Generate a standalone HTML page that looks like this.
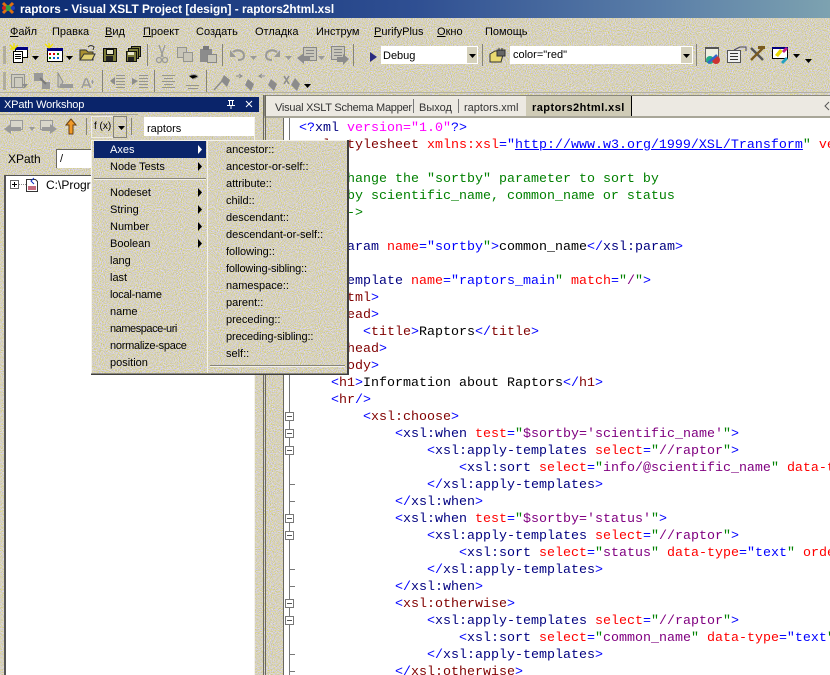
<!DOCTYPE html>
<html><head><meta charset="utf-8"><title>raptors</title>
<style>
html,body{margin:0;padding:0;width:830px;height:675px;overflow:hidden;background:#d6d2bd}
*{box-sizing:border-box}
.a{position:absolute}
.t{position:absolute;font:11px/14px "Liberation Sans",sans-serif;color:#000;white-space:pre}
.n{position:absolute;left:0;top:0}
pre{position:absolute;left:299px;top:120px;width:531px;height:555px;overflow:hidden;margin:0;font:13.33px/17px "Liberation Mono",monospace;color:#000}
pre i{font-style:normal}
.b{color:#00f}.v{color:#000080}.m{color:#800000}.r{color:#f00}.g{color:#008000}.p{color:#800080}.k{color:#f0f}.c{color:#008000}
</style></head>
<body>
<svg class="n" width="830" height="675"><defs>
<filter id="nz" x="0" y="0" width="100%" height="100%" color-interpolation-filters="sRGB"><feTurbulence type="fractalNoise" baseFrequency="0.95" numOctaves="1" seed="4"/><feColorMatrix type="matrix" values="0.3 0 0 0 0.69  0.3 0 0 0 0.67  0 1.4 0 0 0.04  0 0 0 0 1"/></filter>
<linearGradient id="tg" x1="0" x2="1" y1="0" y2="0"><stop offset="0" stop-color="#0a2a70"/><stop offset=".5" stop-color="#2f4f92"/><stop offset=".8" stop-color="#5b7fa8"/><stop offset="1" stop-color="#7da2b0"/></linearGradient>
</defs><rect width="830" height="675" filter="url(#nz)"/></svg>

<!-- title bar -->
<svg class="n" width="830" height="18"><rect width="830" height="18" fill="url(#tg)"/></svg>
<div class="t" style="left:20px;top:2px;font-size:11.850px;font-weight:bold;color:#fff">raptors - Visual XSLT Project [design] - raptors2html.xsl</div>

<!-- menu bar -->
<div class="t" style="left:10px;top:25px"><u>Ф</u>айл</div>
<div class="t" style="left:52px;top:25px">Правка</div>
<div class="t" style="left:105px;top:25px"><u>В</u>ид</div>
<div class="t" style="left:143px;top:25px"><u>П</u>роект</div>
<div class="t" style="left:196px;top:25px">Создать</div>
<div class="t" style="left:255px;top:25px">Отладка</div>
<div class="t" style="left:316px;top:25px">Инструм</div>
<div class="t" style="left:374px;top:25px"><u>P</u>urifyPlus</div>
<div class="t" style="left:437px;top:25px"><u>О</u>кно</div>
<div class="t" style="left:485px;top:25px">Помощь</div>

<!-- toolbar combos -->
<div class="a" style="left:381px;top:46px;width:97px;height:18px;background:#fff"></div>
<div class="a" style="left:467px;top:47px;width:10px;height:16px;background:#d6d2bd"></div>
<div class="t" style="left:383px;top:49px">Debug</div>
<div class="a" style="left:510px;top:46px;width:183px;height:18px;background:#fff"></div>
<div class="a" style="left:681px;top:47px;width:11px;height:16px;background:#d6d2bd"></div>
<div class="t" style="left:513px;top:48px">color="red"</div>

<!-- icons -->
<svg class="n" width="830" height="140">
<!-- grips -->
<g fill="#8c8a80"><rect x="3" y="46" width="3" height="18" opacity=".5"/><rect x="3" y="72" width="3" height="18" opacity=".5"/></g>
<!-- separators -->
<g fill="#85837a"><rect x="147" y="44" width="1" height="22"/><rect x="222" y="44" width="1" height="22"/><rect x="353" y="44" width="1" height="22"/><rect x="482" y="44" width="1" height="22"/><rect x="696" y="44" width="1" height="22"/><rect x="102" y="70" width="1" height="22"/><rect x="154" y="70" width="1" height="22"/><rect x="206" y="70" width="1" height="22"/></g>
<!-- new project -->
<rect x="15.500" y="47.500" width="12" height="10" fill="#fff" stroke="#000"/><rect x="15" y="47" width="13" height="3" fill="#000080"/>
<rect x="13.500" y="51.500" width="9" height="11" fill="#fff" stroke="#000"/><path d="M15 54.500h6M15 56.500h6M15 58.500h6" stroke="#000"/><path d="M10 45l4 4M14 43v6M18 45l-4 4M10 49h5" stroke="#f0e000" stroke-width="1.300"/>
<path d="M32 56h7l-3.500 4z" fill="#000"/>
<!-- new item -->
<rect x="47.500" y="48.500" width="15" height="13" fill="#fff" stroke="#000"/><rect x="47" y="48" width="16" height="3" fill="#000080"/>
<path d="M49 53h2v2h-2zM53 53h2v2h-2z" fill="#d00"/><path d="M57 53h2v2h-2zM49 57h2v2h-2z" fill="#080"/><path d="M53 57h2v2h-2zM57 57h2v2h-2z" fill="#06c"/>
<path d="M45 44l4 4M49 43v5M53 44l-4 4" stroke="#f0e000" stroke-width="1.300"/>
<path d="M66 56h7l-3.500 4z" fill="#000"/>
<!-- open -->
<path d="M80 60V50h6l2 2h5v8z" fill="#a89030" stroke="#333"/><path d="M80 60l4-6h11l-3 6z" fill="#e0d070" stroke="#333"/><path d="M88 47c2-2 4-2 6 0l-1 3" fill="none" stroke="#333"/>
<!-- save -->
<rect x="103.500" y="48.500" width="13" height="13" fill="#7c7c38" stroke="#111"/><rect x="106.500" y="49.500" width="7" height="5" fill="#e8e6c8" stroke="#111"/><rect x="106" y="56" width="7" height="5" fill="#222"/>
<!-- save all -->
<rect x="131.500" y="46.500" width="9" height="10" fill="#7c7c38" stroke="#111"/><rect x="128.500" y="48.500" width="10" height="10" fill="#7c7c38" stroke="#111"/><rect x="126.500" y="51.500" width="10" height="10" fill="#7c7c38" stroke="#111"/><rect x="128" y="52" width="6" height="3" fill="#e8e6c8"/><rect x="128" y="57" width="6" height="4" fill="#222"/>
<!-- cut, copy, paste disabled -->
<g fill="none" stroke="#9a9a96" stroke-width="1.300"><path d="M159 45l4 12M165 45l-4 12"/><circle cx="159" cy="60" r="2.500"/><circle cx="165" cy="60" r="2.500"/></g>
<g fill="#c8c5b8" stroke="#95958f"><rect x="177.500" y="47.500" width="9" height="10"/><rect x="183.500" y="52.500" width="9" height="9"/></g>
<rect x="200" y="49" width="12" height="13" fill="#8c8c8c"/><rect x="203" y="46" width="6" height="4" fill="#7a7a7a"/><rect x="207.500" y="54.500" width="9" height="8" fill="#c8c6ba" stroke="#888"/>
<!-- undo redo -->
<g fill="none" stroke="#9a9a96" stroke-width="2"><path d="M233 52c4-3 11-2 11 4 0 3-3 4-6 4"/><path d="M277 52c-4-3-11-2-11 4 0 3 3 4 6 4"/></g>
<path d="M230 50v7h6zM280 50v7h-6z" fill="#9a9a96"/>
<path d="M250 56h7l-3.500 4zM285 56h7l-3.500 4zM318 56h7l-3.500 4z" fill="#999"/>
<rect x="303.500" y="47.500" width="13" height="13" fill="#c8c6ba" stroke="#888"/><path d="M306 50.500h8M306 53.500h8M306 56.500h8" stroke="#888"/><path d="M297 58l7-5v3h6v5h-6v3z" fill="#8c8c8c"/>
<rect x="331.500" y="46.500" width="13" height="13" fill="#c8c6ba" stroke="#888"/><path d="M334 49.500h8M334 52.500h8M334 55.500h8" stroke="#888"/><path d="M349 59l-6-5v3h-6v5h6v3z" fill="#8c8c8c"/>
<!-- play -->
<path d="M370 52l7 5-7 5z" fill="#2a2a80"/>
<path d="M469 54h7l-3.500 4zM683 54h7l-3.500 4z" fill="#000"/>
<!-- open config -->
<path d="M490 62V54l5-3h9l-3 11z" fill="#e8d870" stroke="#333"/><path d="M497 50h8v6h-8z" fill="#666" stroke="#333"/><path d="M499 48v3M502 48v3" stroke="#333"/>
<!-- right icons -->
<rect x="705.500" y="47.500" width="13" height="14" fill="#eeeee0" stroke="#666"/><rect x="705" y="47" width="14" height="2" fill="#555"/><circle cx="710" cy="60" r="4" fill="#2a8"/><circle cx="716" cy="60" r="4" fill="#c33"/><path d="M708 63l9-8" stroke="#36c" stroke-width="2.500"/>
<rect x="727.500" y="50.500" width="13" height="12" fill="#eee" stroke="#555"/><path d="M730 53.500h8M730 56.500h8M730 59.500h8" stroke="#333"/><path d="M734 50l6-3h6v4" fill="none" stroke="#446"/>
<path d="M751 48l12 12" stroke="#555" stroke-width="2.400"/><path d="M763 48l-12 12" stroke="#7a5a20" stroke-width="2.400"/><path d="M758 46h7v3h-7z" fill="#7a5a20"/>
<rect x="772.500" y="47.500" width="15" height="11" fill="#fff" stroke="#000"/><rect x="772" y="47" width="16" height="2" fill="#000080"/><path d="M775 55l5-6 3 2-5 6z" fill="#e8d800"/><path d="M782 51l4-4 2 2-4 4z" fill="#c0208a"/><path d="M781 62l5-5 2 2-5 5z" fill="#20a0c0"/>
<path d="M793 54h7l-3.500 4zM805 59h7l-3.500 4z" fill="#000"/>
<!-- toolbar 2, disabled -->
<g stroke="#95958f" fill="#cdcbbf"><rect x="11.500" y="74.500" width="13" height="13"/><rect x="14.500" y="77.500" width="8" height="10"/></g><path d="M22 84h6l-3 4z" fill="#8c8c8c"/>
<path d="M34 73h9v8h-9zM42 82h8v7h-8z" fill="#999"/><path d="M40 78l6 6" stroke="#7a7a7a" stroke-width="2"/>
<path d="M58 73v14h2l3-5z" fill="#c8c6ba" stroke="#8c8c8c"/><rect x="60" y="84" width="13" height="4" fill="#999"/>
<path d="M82 88l3.500-9h1.500l3.500 9M84 85h5" fill="none" stroke="#999" stroke-width="1.500"/><path d="M91 82h3M92.500 80v4" stroke="#999"/>
<g stroke="#95958f"><path d="M116 75.500h9M116 78.500h9M116 81.500h9M116 84.500h9M116 87.500h9"/><path d="M139 75.500h9M139 78.500h9M139 81.500h9M139 84.500h9M139 87.500h9"/><path d="M162 75.500h13M164 78.500h9M162 81.500h13M164 84.500h9M162 87.500h13"/><path d="M186 85.500h13M188 88.500h10M189 76c3-2 8-2 9 1l-5 2"/></g>
<path d="M110 81l5-4v8zM132 78l6 3-6 4z" fill="#8c8c8c"/>
<path d="M214 90l8-9" stroke="#8c8c8c" stroke-width="1.500"/><path d="M224 75l6 5-3 7-6-6z" fill="#8c8c8c"/>
<path d="M236 76h5M239 74l3 2-3 2" stroke="#8c8c8c" fill="none"/><path d="M248 79l6 5-3 7-6-6z" fill="#8c8c8c"/>
<path d="M260 76h5M262 74l-3 2 3 2" stroke="#8c8c8c" fill="none"/><path d="M271 79l6 5-3 7-6-6z" fill="#8c8c8c"/>
<path d="M284 76l5 8M289 76l-5 8" stroke="#8c8c8c" stroke-width="1.500"/><path d="M295 78l5 6-3 7-6-6z" fill="#8c8c8c"/>
<path d="M304 84h7l-3.500 4z" fill="#000"/>
<!-- separator under toolbars -->
<rect x="0" y="92" width="830" height="1" fill="#b4b2a4"/>
</svg>

<!-- XPath Workshop -->
<div class="a" style="left:0;top:97px;width:259px;height:15px;background:#0a246a"></div>
<div class="t" style="left:4px;top:98px;color:#fff;letter-spacing:-.15px">XPath Workshop</div>
<svg class="n" width="265" height="175">
<path d="M228 100.500h6M229.500 100v5M232.500 100v5M227 105.500h8M231 105v4" stroke="#fff" fill="none"/>
<path d="M246 101l6 6M252 101l-6 6" stroke="#fff"/>
<rect x="0" y="114" width="138" height="1" fill="#a8a69a"/>
<!-- back / fwd / up -->
<rect x="10.500" y="120.500" width="12" height="9" fill="#d8d6ca" stroke="#999"/><path d="M4 129l7-5v3h10v4H11v3z" fill="#999"/>
<path d="M29 127h6l-3 4z" fill="#999"/>
<rect x="40.500" y="120.500" width="12" height="9" fill="#d8d6ca" stroke="#999"/><path d="M57 129l-7-5v3H42v4h8v3z" fill="#999"/>
<path d="M71 119l-5 6h3v9h4v-9h3z" fill="#f09a28" stroke="#6a4010"/>
<rect x="86" y="118" width="1" height="17" fill="#85837a"/>
<rect x="131" y="118" width="1" height="17" fill="#85837a"/>
<rect x="91.500" y="116.500" width="22" height="21" fill="none" stroke="#f0eee4"/>
<path d="M113.500 116.500h13v21h-13z" fill="none" stroke="#85837a"/>
<path d="M118 126h7l-3.500 4z" fill="#000"/>
</svg>
<div class="t" style="left:94px;top:120px;font-size:10px">f (x)</div>
<div class="a" style="left:144px;top:117px;width:111px;height:19px;background:#fff"></div>
<div class="t" style="left:147px;top:122px">raptors</div>
<div class="t" style="left:8px;top:152px;font-size:12px">XPath</div>
<div class="a" style="left:56px;top:149px;width:60px;height:19px;background:#fff;border-top:1px solid #6a6860;border-left:1px solid #6a6860"></div>
<div class="t" style="left:60px;top:152px">/</div>

<!-- tree -->
<div class="a" style="left:4px;top:175px;width:250px;height:500px;background:#fff;border-left:2px solid #555;border-top:1px solid #555"></div>
<svg class="n" width="60" height="200">
<rect x="10.500" y="180.500" width="8" height="8" fill="#fff" stroke="#666"/><path d="M12 184.500h5M14.500 182v5" stroke="#000"/>
<path d="M19 184.500h7" stroke="#888" stroke-dasharray="1 1"/>
<path d="M26.500 179.500h9l2 2v10h-11z" fill="#fff" stroke="#333"/><path d="M34 178l-3 3 3 3" stroke="#1030c0" fill="none"/><path d="M28 187h8M28 189h8" stroke="#a01030" stroke-width="1.200"/>
</svg>
<div class="t" style="left:46px;top:178px;font-size:12px">C:\Progra</div>

<!-- tabs -->
<div class="a" style="left:264px;top:95px;width:566px;height:22px;background:#ece9e2;border-top:1px solid #8a887c;border-left:1px solid #8a887c"></div>
<div class="a" style="left:526px;top:96px;width:106px;height:21px;background:#cfcbb6;border-right:1px solid #000"></div>
<div class="a" style="left:458px;top:99px;width:1px;height:14px;background:#777"></div>
<div class="a" style="left:413px;top:99px;width:1px;height:14px;background:#777"></div>
<div class="a" style="left:264px;top:116px;width:566px;height:2px;background:#a8a698"></div>
<div class="t" style="left:275px;top:101px;color:#333;letter-spacing:-.25px">Visual XSLT Schema Mapper</div>
<div class="t" style="left:419px;top:101px;color:#333">Выход</div>
<div class="t" style="left:464px;top:101px;color:#333">raptors.xml</div>
<div class="t" style="left:532px;top:101px;font-weight:bold;letter-spacing:.45px">raptors2html.xsl</div>
<svg class="n" style="left:822px;top:100px" width="8" height="12"><path d="M7 2L3 6l4 4" fill="none" stroke="#555"/></svg>

<!-- editor -->
<div class="a" style="left:254px;top:118px;width:1px;height:557px;background:#f4f2ea"></div>
<div class="a" style="left:263px;top:95px;width:1px;height:580px;background:#6a6860"></div>
<div class="a" style="left:265px;top:95px;width:1px;height:580px;background:#6a6860"></div>
<div class="a" style="left:283px;top:118px;width:547px;height:557px;background:#fff;border-left:1px solid #6a6860"></div>
<svg class="n" width="300" height="675" style="left:0;top:0">
<path d="M289.500 118V675" stroke="#777"/>
<g stroke="#777" fill="#fff"><rect x="285.500" y="412.500" width="8" height="8"/><rect x="285.500" y="429.500" width="8" height="8"/><rect x="285.500" y="446.500" width="8" height="8"/><rect x="285.500" y="514.500" width="8" height="8"/><rect x="285.500" y="531.500" width="8" height="8"/><rect x="285.500" y="599.500" width="8" height="8"/><rect x="285.500" y="616.500" width="8" height="8"/></g>
<path d="M287 416.500h5M287 433.500h5M287 450.500h5M287 518.500h5M287 535.500h5M287 603.500h5M287 620.500h5" stroke="#555"/>
<path d="M290 484.500h5M290 501.500h5M290 569.500h5M290 586.500h5M290 654.500h5M290 671.500h5" stroke="#777"/>
</svg>

<pre><i class="b">&lt;?</i><i class="v">xml</i> <i class="k">version="1.0"</i><i class="b">?&gt;</i>
<i class="b">&lt;</i><i class="m">xsl:stylesheet</i> <i class="r">xmlns:xsl</i><i class="b">=</i><i class="b">"<u>http://www.w3.org/1999/XSL/Transform</u></i><i class="g">"</i> <i class="r">version</i><i class="b">=</i>

<i class="b">&lt;!--</i> <i class="c">change the "sortby" parameter to sort by</i>
<i class="c">      by scientific_name, common_name or status</i>
<i class="c">     --&gt;</i>

<i class="b">&lt;</i><i class="v">xsl:param</i> <i class="r">name</i><i class="b">="sortby</i><i class="g">"</i><i class="b">&gt;</i>common_name<i class="b">&lt;/</i><i class="v">xsl:param</i><i class="b">&gt;</i>

<i class="b">&lt;</i><i class="v">xsl:template</i> <i class="r">name</i><i class="b">="raptors_main</i><i class="g">"</i> <i class="r">match</i><i class="b">=</i><i class="g">"</i><i class="p">/</i><i class="g">"</i><i class="b">&gt;</i>
    <i class="b">&lt;</i><i class="m">html</i><i class="b">&gt;</i>
    <i class="b">&lt;</i><i class="m">head</i><i class="b">&gt;</i>
        <i class="b">&lt;</i><i class="m">title</i><i class="b">&gt;</i>Raptors<i class="b">&lt;/</i><i class="m">title</i><i class="b">&gt;</i>
    <i class="b">&lt;/</i><i class="m">head</i><i class="b">&gt;</i>
    <i class="b">&lt;</i><i class="m">body</i><i class="b">&gt;</i>
    <i class="b">&lt;</i><i class="m">h1</i><i class="b">&gt;</i>Information about Raptors<i class="b">&lt;/</i><i class="m">h1</i><i class="b">&gt;</i>
    <i class="b">&lt;</i><i class="m">hr</i><i class="b">/&gt;</i>
        <i class="b">&lt;</i><i class="m">xsl:choose</i><i class="b">&gt;</i>
            <i class="b">&lt;</i><i class="v">xsl:when</i> <i class="r">test</i><i class="b">=</i><i class="g">"</i><i class="p">$sortby='scientific_name'</i><i class="g">"</i><i class="b">&gt;</i>
                <i class="b">&lt;</i><i class="v">xsl:apply-templates</i> <i class="r">select</i><i class="b">=</i><i class="g">"</i><i class="p">//raptor</i><i class="g">"</i><i class="b">&gt;</i>
                    <i class="b">&lt;</i><i class="v">xsl:sort</i> <i class="r">select</i><i class="b">=</i><i class="g">"</i><i class="p">info/@scientific_name</i><i class="g">"</i> <i class="r">data-type</i>
                <i class="b">&lt;/</i><i class="v">xsl:apply-templates</i><i class="b">&gt;</i>
            <i class="b">&lt;/</i><i class="v">xsl:when</i><i class="b">&gt;</i>
            <i class="b">&lt;</i><i class="v">xsl:when</i> <i class="r">test</i><i class="b">=</i><i class="g">"</i><i class="p">$sortby='status'</i><i class="g">"</i><i class="b">&gt;</i>
                <i class="b">&lt;</i><i class="v">xsl:apply-templates</i> <i class="r">select</i><i class="b">=</i><i class="g">"</i><i class="p">//raptor</i><i class="g">"</i><i class="b">&gt;</i>
                    <i class="b">&lt;</i><i class="v">xsl:sort</i> <i class="r">select</i><i class="b">=</i><i class="g">"</i><i class="p">status</i><i class="g">"</i> <i class="r">data-type</i><i class="b">="text</i><i class="g">"</i> <i class="r">order</i>
                <i class="b">&lt;/</i><i class="v">xsl:apply-templates</i><i class="b">&gt;</i>
            <i class="b">&lt;/</i><i class="v">xsl:when</i><i class="b">&gt;</i>
            <i class="b">&lt;</i><i class="m">xsl:otherwise</i><i class="b">&gt;</i>
                <i class="b">&lt;</i><i class="v">xsl:apply-templates</i> <i class="r">select</i><i class="b">=</i><i class="g">"</i><i class="p">//raptor</i><i class="g">"</i><i class="b">&gt;</i>
                    <i class="b">&lt;</i><i class="v">xsl:sort</i> <i class="r">select</i><i class="b">=</i><i class="g">"</i><i class="p">common_name</i><i class="g">"</i> <i class="r">data-type</i><i class="b">="text</i><i class="g">"</i> <i class="r">order</i>
                <i class="b">&lt;/</i><i class="v">xsl:apply-templates</i><i class="b">&gt;</i>
            <i class="b">&lt;/</i><i class="m">xsl:otherwise</i><i class="b">&gt;</i></pre>

<!-- popup menu -->
<svg class="n" style="left:91px;top:140px" width="258" height="235">
<rect width="258" height="235" filter="url(#nz)"/>
<path d="M.5 235V.5H257" fill="none" stroke="#f4f2ea"/>
<path d="M257 0V234.500H0" fill="none" stroke="#404040" stroke-width="2"/>
<rect x="116" y="1" width="1" height="232" fill="#f4f2ea"/>
<rect x="3" y="1" width="112" height="17" fill="#0a246a"/>
<rect x="3" y="38" width="112" height="1" fill="#85837a"/><rect x="3" y="39" width="112" height="1" fill="#f4f2ea"/>
<rect x="119" y="225" width="135" height="1" fill="#85837a"/><rect x="119" y="226" width="135" height="1" fill="#f4f2ea"/>
<g fill="#000"><path d="M107 5l4 4.500-4 4.500z" fill="#fff"/><path d="M107 22l4 4.500-4 4.500zM107 48l4 4.500-4 4.500zM107 65l4 4.500-4 4.500zM107 82l4 4.500-4 4.500zM107 99l4 4.500-4 4.500z"/></g>
</svg>
<div class="t" style="left:110px;top:143px;color:#fff">Axes</div>
<div class="t" style="left:110px;top:160px">Node Tests</div>
<div class="t" style="left:110px;top:186px">Nodeset</div>
<div class="t" style="left:110px;top:203px">String</div>
<div class="t" style="left:110px;top:220px">Number</div>
<div class="t" style="left:110px;top:237px">Boolean</div>
<div class="t" style="left:110px;top:254px">lang</div>
<div class="t" style="left:110px;top:271px">last</div>
<div class="t" style="left:110px;top:288px;letter-spacing:-.2px">local-name</div>
<div class="t" style="left:110px;top:305px">name</div>
<div class="t" style="left:110px;top:322px;letter-spacing:-.45px">namespace-uri</div>
<div class="t" style="left:110px;top:339px;letter-spacing:-.27px">normalize-space</div>
<div class="t" style="left:110px;top:356px">position</div>
<div class="t" style="left:226px;top:143px">ancestor::</div>
<div class="t" style="left:226px;top:160px">ancestor-or-self::</div>
<div class="t" style="left:226px;top:177px">attribute::</div>
<div class="t" style="left:226px;top:194px">child::</div>
<div class="t" style="left:226px;top:211px">descendant::</div>
<div class="t" style="left:226px;top:228px">descendant-or-self::</div>
<div class="t" style="left:226px;top:245px">following::</div>
<div class="t" style="left:226px;top:262px;letter-spacing:-.15px">following-sibling::</div>
<div class="t" style="left:226px;top:279px">namespace::</div>
<div class="t" style="left:226px;top:296px">parent::</div>
<div class="t" style="left:226px;top:313px">preceding::</div>
<div class="t" style="left:226px;top:330px;letter-spacing:-.1px">preceding-sibling::</div>
<div class="t" style="left:226px;top:347px">self::</div>

<!-- app icon -->
<svg class="n" width="20" height="18"><path d="M3 3l10 10M13 3L3 13" stroke="#e07010" stroke-width="3"/><circle cx="8" cy="8" r="3" fill="#30a040"/><circle cx="4" cy="8" r="2" fill="#d02020"/><circle cx="13" cy="8" r="2" fill="#2040c0"/></svg>
</body></html>
